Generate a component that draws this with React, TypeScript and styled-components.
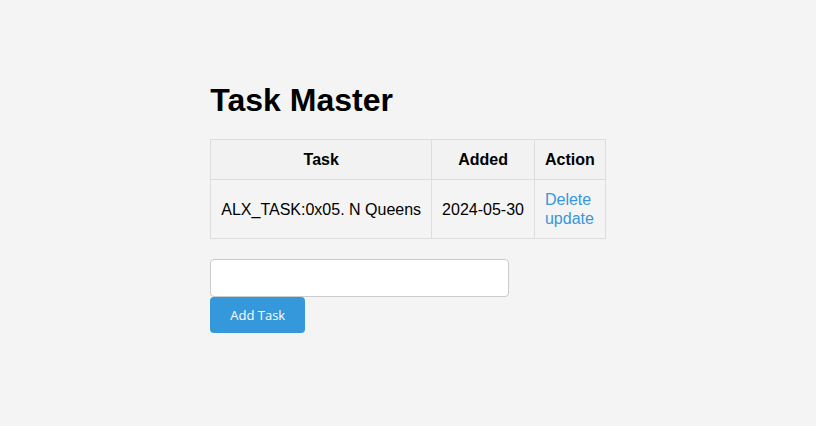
import React from "react";
import styled, { createGlobalStyle } from "styled-components";

const Global = createGlobalStyle`
  html, body { margin: 0; padding: 0; }
  body {
    background: #f4f4f4;
    font-family: "Liberation Sans", Arial, sans-serif;
    color: #000;
  }
`;

const Container = styled.div`
  width: fit-content;
  margin: 0 auto;
  padding-top: 58px;
`;

const Title = styled.h1`
  font-size: 32px;
  font-weight: bold;
  margin: 24px 0 20px;
  line-height: 37px;
`;

const Table = styled.table`
  border-collapse: collapse;
  font-size: 16px;
`;

const Th = styled.th`
  border: 1px solid #ddd;
  background: #f2f2f2;
  padding: 10px;
  font-weight: bold;
  line-height: 19px;
  text-align: center;
`;

const Td = styled.td`
  border: 1px solid #ddd;
  padding: 10px;
  line-height: 19px;
  text-align: center;
`;

const ActionTd = styled(Td)`
  text-align: left;
`;

const Link = styled.a`
  display: block;
  color: #3498db;
  text-decoration: none;
`;

const Form = styled.form`
  display: flex;
  flex-direction: column;
  align-items: flex-start;
  margin-top: 20px;
`;

const Input = styled.input`
  width: 299px;
  height: 38px;
  box-sizing: border-box;
  border: 1px solid #ccc;
  border-radius: 4px;
  background: #fff;
  padding: 8px;
  font-size: 14px;
`;

const Button = styled.button`
  background: #3498db;
  color: #fff;
  border: none;
  border-radius: 4px;
  padding: 10px 20px;
  font-family: "Open Sans", sans-serif;
  font-size: 13px;
  line-height: 16px;
  cursor: pointer;
`;

export default function App() {
  return (
    <>
      <Global />
      <Container>
        <Title>Task Master</Title>
        <Table>
          <thead>
            <tr>
              <Th>Task</Th>
              <Th>Added</Th>
              <Th>Action</Th>
            </tr>
          </thead>
          <tbody>
            <tr>
              <Td>ALX_TASK:0x05. N Queens</Td>
              <Td>2024-05-30</Td>
              <ActionTd>
                <Link href="#">Delete</Link>
                <Link href="#">update</Link>
              </ActionTd>
            </tr>
          </tbody>
        </Table>
        <Form onSubmit={(e) => e.preventDefault()}>
          <Input type="text" />
          <Button type="submit">Add Task</Button>
        </Form>
      </Container>
    </>
  );
}
